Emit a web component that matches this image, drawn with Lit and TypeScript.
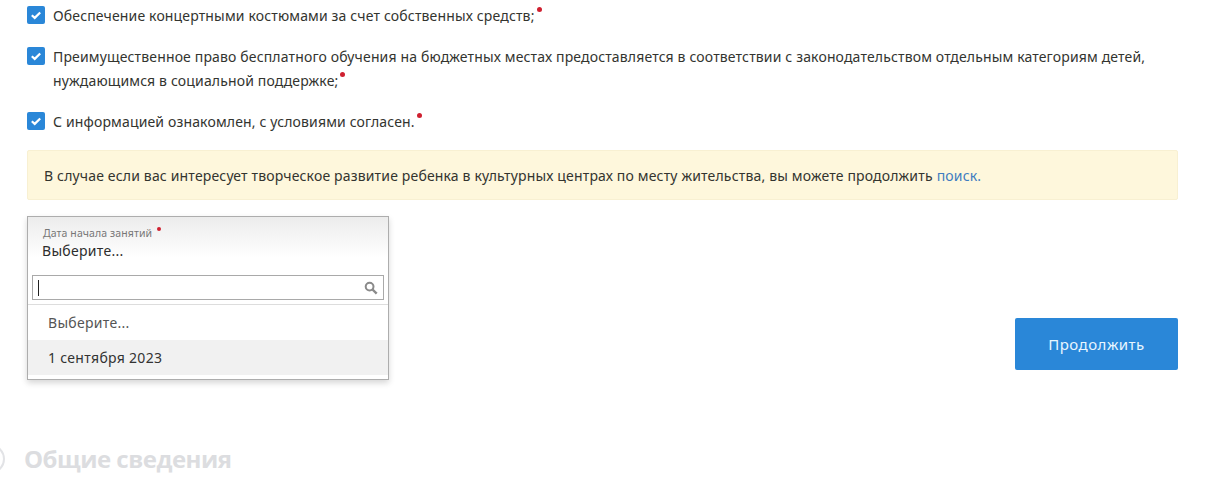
import { LitElement, html, css } from "lit";
import { customElement } from "lit/decorators.js";

const check = html`<svg class="box" viewBox="0 0 18 18"><rect width="18" height="18" rx="2" fill="#2a87d8"/><path d="M4.8 9.2l2.9 2.7 5.5-5.4" fill="none" stroke="#fff" stroke-width="2.2"/></svg>`;

@customElement("app-root")
export class AppRoot extends LitElement {
  static styles = css`
    :host { display: block; width: 1205px; height: 491px; overflow: hidden; background: #fff; font-family: "Noto Sans", "Open Sans", sans-serif; font-size: 14px; color: #33342f; }
    .page { padding: 6px 27px 0; display: flex; flex-direction: column; }
    .row { display: flex; gap: 8px; line-height: 24px; margin-bottom: 19px; }
    .box { width: 18px; height: 18px; flex: none; }
    .text { margin-top: -2px; flex: 1; letter-spacing: 0.15px; }
    .req { display: inline-block; width: 5px; height: 5px; border-radius: 50%; background: #cf2030; vertical-align: 9px; margin-left: 2px; }
    .alert { height: 50px; box-sizing: border-box; margin-top: -3px; padding-left: 16px; display: flex; align-items: center; background: #fef7dc; border: 1px solid #f8f0d2; border-radius: 2px; letter-spacing: 0.165px; }
    .alert a { color: #3f7cc0; margin-left: 4px; }
    .line { display: flex; justify-content: space-between; align-items: flex-start; margin-top: 16px; }
    .select { width: 362px; height: 164px; box-sizing: border-box; border: 1px solid #adadad; box-shadow: 0 3px 6px rgba(0,0,0,.16); background: #fff; display: flex; flex-direction: column; }
    .head { height: 57px; box-sizing: border-box; padding: 9px 14px 0; background: linear-gradient(#ececec, #fff 72%); }
    .label { font-size: 10.5px; line-height: 14px; color: #777; display: flex; gap: 5px; letter-spacing: 0.1px; padding-left: 1px; }
    .label .req { margin: 1px 0 0; width: 4px; height: 4px; }
    .val { line-height: 20px; color: #2d2d2d; margin-top: 1px; letter-spacing: 0.3px; }
    .search { height: 25px; box-sizing: border-box; margin: 1px 4px 0; border: 1px solid #a9a9a9; display: flex; align-items: center; justify-content: space-between; padding: 0 5px; }
    .caret { width: 1px; height: 16px; background: #222; }
    .search svg { width: 14px; height: 14px; }
    .sep { height: 1px; background: #ddd; margin-top: 4px; }
    .opt { height: 35px; display: flex; align-items: center; padding-left: 20px; color: #555; letter-spacing: 0.3px; }
    .opt.on { background: #f1f1f1; color: #333; }
    .btn { margin-top: 102px; width: 163px; height: 52px; border-radius: 2px; background: #2a87d8; color: #e8f6ff; font-size: 15px; letter-spacing: 0.5px; display: flex; align-items: center; justify-content: center; }
    .title { display: flex; align-items: center; gap: 19px; margin: 61px 0 0 -52px; font-size: 24px; line-height: 36px; font-weight: 700; color: #dcdde0; font-family: "Open Sans", sans-serif; letter-spacing: -0.5px; }
    .ring { width: 30px; height: 30px; box-sizing: border-box; border: 2px solid #e2e3e6; border-radius: 50%; }
  `;

  render() {
    return html`<div class="page">
      <div class="row">${check}<div class="text">Обеспечение концертными костюмами за счет собственных средств;<span class="req"></span></div></div>
      <div class="row">${check}<div class="text">Преимущественное право бесплатного обучения на бюджетных местах предоставляется в соответствии с законодательством отдельным категориям детей, нуждающимся в социальной поддержке;<span class="req"></span></div></div>
      <div class="row">${check}<div class="text">С информацией ознакомлен, с условиями согласен.<span class="req"></span></div></div>
      <div class="alert">В случае если вас интересует творческое развитие ребенка в культурных центрах по месту жительства, вы можете продолжить <a>поиск.</a></div>
      <div class="line">
        <div class="select">
          <div class="head">
            <div class="label">Дата начала занятий<span class="req"></span></div>
            <div class="val">Выберите...</div>
          </div>
          <div class="search"><span class="caret"></span>
            <svg viewBox="0 0 14 14"><circle cx="5.6" cy="5.6" r="3.9" fill="none" stroke="#8a8a8a" stroke-width="2"/><path d="M8.5 8.5l4.2 4.2" stroke="#8a8a8a" stroke-width="2.4"/></svg>
          </div>
          <div class="sep"></div>
          <div class="opt">Выберите...</div>
          <div class="opt on">1 сентября 2023</div>
        </div>
        <div class="btn">Продолжить</div>
      </div>
      <div class="title"><span class="ring"></span>Общие сведения</div>
    </div>`;
  }
}
